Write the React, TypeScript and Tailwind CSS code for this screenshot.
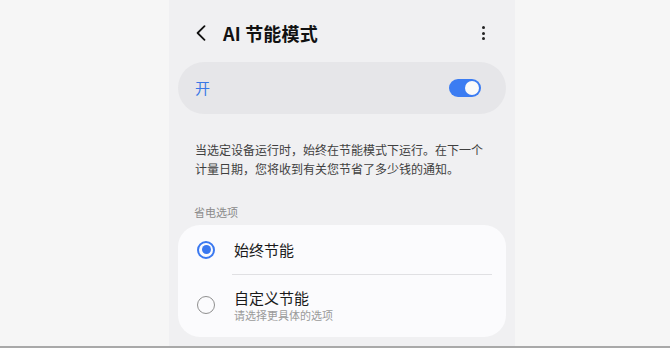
import React from "react";

export default function App() {
  return (
    <div className="w-[670px] h-[348px] bg-[#f6f6f6] border-b-2 border-[#a9a9a9] overflow-hidden font-['Noto_Sans_CJK_SC','Noto_Sans',sans-serif]">
      <div className="ml-[169px] w-[346px] h-[346px] bg-[#f0f0f2] flex flex-col">
        {/* header */}
        <div className="h-[62px] pt-[4px] flex items-center pl-[26px] pr-[30px]">
          <svg width="12" height="16" viewBox="0 0 12 16" className="shrink-0">
            <path d="M9.5 1.2 L2.6 8 L9.5 14.8" fill="none" stroke="#111" strokeWidth="1.8" strokeLinecap="round" strokeLinejoin="round" />
          </svg>
          <div className="ml-[16px] text-[18px] font-bold text-[#111] leading-none tracking-[0.2px]">AI 节能模式</div>
          <div className="ml-auto flex flex-col items-center gap-[2.5px]">
            <span className="w-[3px] h-[3px] rounded-full bg-[#222]" />
            <span className="w-[3px] h-[3px] rounded-full bg-[#222]" />
            <span className="w-[3px] h-[3px] rounded-full bg-[#222]" />
          </div>
        </div>

        {/* toggle card */}
        <div className="mx-[9px] h-[52px] rounded-full bg-[#e6e6e9] flex items-center pl-[17px] pr-[25px]">
          <span className="text-[15px] text-[#3a78e6] leading-none -mt-[2px]">开</span>
          <div className="ml-auto w-[32px] h-[18px] rounded-full bg-[#3b7cf2] flex items-center justify-end pr-[2px]">
            <span className="w-[14px] h-[14px] rounded-full bg-[#fafafa]" />
          </div>
        </div>

        {/* description */}
        <p className="mt-[26px] px-[26px] text-[12px] leading-[19px] text-[#3f3f3f]">
          当选定设备运行时，始终在节能模式下运行。在下一个
          <br />
          计量日期，您将收到有关您节省了多少钱的通知。
        </p>

        <div className="mt-[27px] pl-[25px] text-[11px] leading-[14px] text-[#8a8a8a]">省电选项</div>

        {/* options card */}
        <div className="mt-[6px] mx-[9px] h-[112px] rounded-[22px] bg-[#fbfbfd] flex flex-col">
          <div className="h-[49px] flex items-center pl-[19px]">
            <span className="w-[18px] h-[18px] rounded-full border-2 border-[#3a78f0] flex items-center justify-center shrink-0">
              <span className="w-[9px] h-[9px] rounded-full bg-[#3a78f0]" />
            </span>
            <span className="ml-[19px] text-[15px] leading-none text-[#1a1a1a]">始终节能</span>
          </div>
          <div className="ml-[54px] mr-[14px] h-px bg-[#e0e0e3]" />
          <div className="flex-1 flex items-center pl-[19px] pb-[2px]">
            <span className="w-[18px] h-[18px] rounded-full border-[1.5px] border-[#8f8f8f] shrink-0" />
            <div className="ml-[19px] flex flex-col">
              <span className="text-[15px] leading-[19px] text-[#1a1a1a]">自定义节能</span>
              <span className="text-[11px] leading-[15px] text-[#9a9a9a] mt-[1px]">请选择更具体的选项</span>
            </div>
          </div>
        </div>
      </div>
    </div>
  );
}
